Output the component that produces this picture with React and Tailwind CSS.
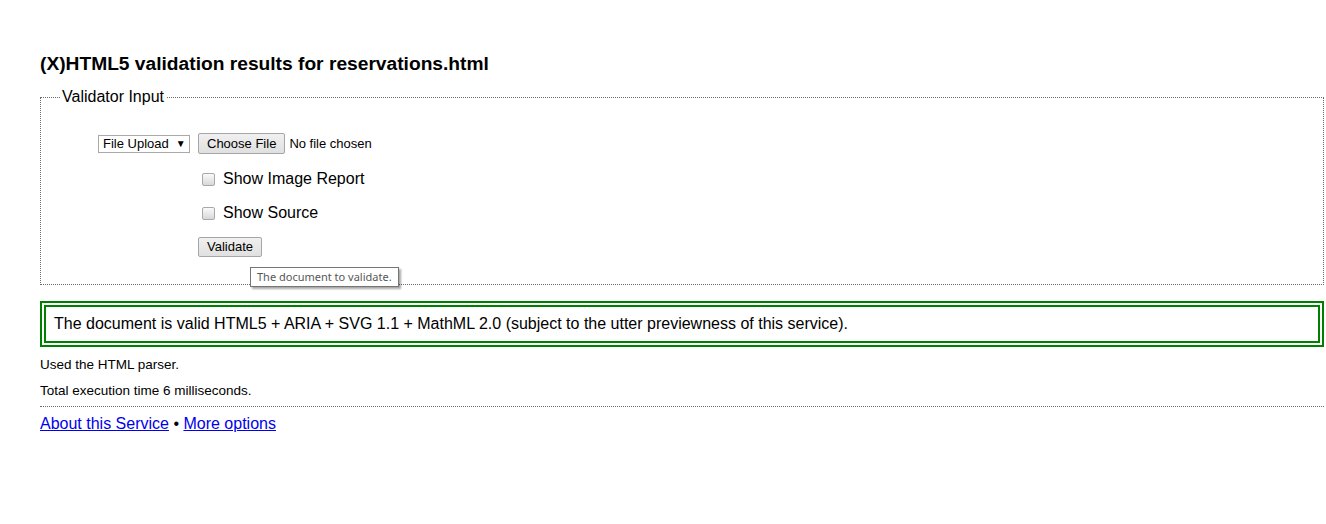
import React from "react";

function Checkbox() {
  return (
    <span className="inline-block w-[13px] h-[13px] rounded-[2px] border border-[#a8a8a8] bg-gradient-to-b from-[#fafafa] to-[#d8d8d8] shrink-0" />
  );
}

export default function App() {
  return (
    <div className="w-[1326px] h-[524px] bg-white text-black pl-[40px] pr-[2px] font-['Liberation_Sans',Arial,sans-serif] overflow-hidden">
      <h2 className="pt-[52px] text-[19.2px] leading-[23px] font-bold">
        (X)HTML5 validation results for reservations.html
      </h2>

      <fieldset className="mt-[13px] border border-dotted border-[#6a6a6a] pl-[19px] pr-0 pb-[27px]">
        <legend className="px-[2px] text-[16px] leading-[18px]">Validator Input</legend>

        <div className="relative pl-[38px]">
          <div className="mt-[27px] flex items-center h-[21px]">
            <div className="flex items-center h-[18px] w-[92px] border border-[#a9a9a9] bg-white pl-[4px] text-[13px] leading-[16px]">
              <span>File Upload</span>
              <span className="ml-[7px] text-[10px] leading-[10px]">▼</span>
            </div>
            <div className="ml-[8px] flex items-center h-[21px] px-[8px] border border-[#a6a6a6] rounded-[2px] bg-gradient-to-b from-[#f0f0f0] to-[#e0e0e0] text-[13px]">
              Choose File
            </div>
            <span className="ml-[4px] text-[13px]">No file chosen</span>
          </div>

          <div className="mt-[15px] flex items-center h-[20px] pl-[104px]">
            <Checkbox />
            <span className="ml-[8px] text-[16px]">Show Image Report</span>
          </div>

          <div className="mt-[14px] flex items-center h-[20px] pl-[104px]">
            <Checkbox />
            <span className="ml-[8px] text-[16px]">Show Source</span>
          </div>

          <div className="mt-[14px] flex items-center h-[20px] pl-[100px]">
            <div className="flex items-center h-[20px] px-[8px] border border-[#a6a6a6] rounded-[2px] bg-gradient-to-b from-[#f0f0f0] to-[#e0e0e0] text-[13px]">
              Validate
            </div>
          </div>

          <div className="absolute left-[190px] top-[134px] h-[20px] px-[6px] flex items-center border border-[#767676] bg-white shadow-[2px_2px_2px_rgba(0,0,0,0.35)] text-[11px] text-[#575757] font-['Noto_Sans',sans-serif] whitespace-nowrap">
            The document to validate.
          </div>
        </div>
      </fieldset>

      <div className="mt-[16px] h-[46px] border-[6px] border-double border-[#008000] pl-[8px] flex items-center text-[16px]">
        The document is valid HTML5 + ARIA + SVG 1.1 + MathML 2.0 (subject to the utter previewness of this service).
      </div>

      <p className="mt-[10px] text-[13.5px] leading-[16px]">Used the HTML parser.</p>
      <p className="mt-[10px] text-[13.5px] leading-[16px]">Total execution time 6 milliseconds.</p>

      <div className="mt-[7px] border-t border-dotted border-[#6a6a6a]" />

      <div className="mt-[8px] text-[16px] leading-[18px]">
        <a href="#" className="text-[#0000ee] underline">About this Service</a>
        <span> • </span>
        <a href="#" className="text-[#0000ee] underline">More options</a>
      </div>
    </div>
  );
}
